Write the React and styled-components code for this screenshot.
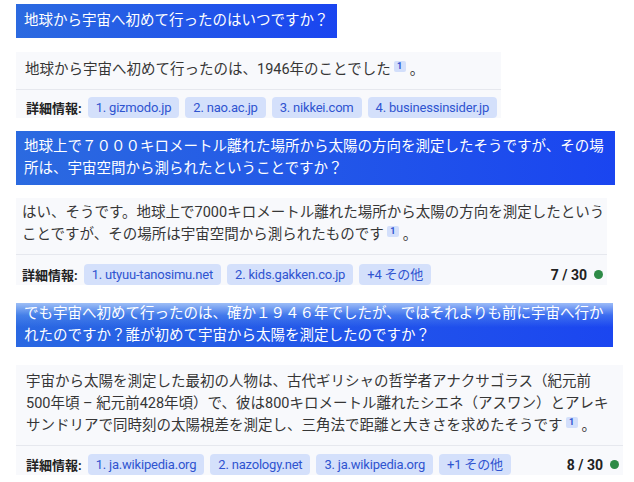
import React from 'react'
import styled, { createGlobalStyle } from 'styled-components'

const Global = createGlobalStyle`
  body{
    margin:0;
    background:#ffffff;
    font-family: Roboto, "Noto Sans CJK JP", sans-serif;
  }
`
const Hilo = styled.div`
  display:flex;
  flex-direction:column;
  align-items:flex-start;
  padding:0 16px;
`
const Pregunta = styled.div`
  margin-top:${p => p.mt}px;
  width:${p => p.w ? p.w + 'px' : 'auto'};
  box-sizing:border-box;
  padding:${p => p.pv}px 8px;
  color:#ffffff;
  font-size:14.5px;
  line-height:22px;
  white-space:nowrap;
  background:${p => p.fade
    ? 'linear-gradient(180deg, rgba(170,200,248,0.9) 0%, rgba(100,155,240,0.45) 28%, rgba(37,99,235,0) 55%), linear-gradient(90deg, #2a68e2, #1b46f0)'
    : 'linear-gradient(90deg, #2b6ae0, #1a45f0)'};
`
const Respuesta = styled.div`
  margin-top:${p => p.mt}px;
  width:${p => p.w ? p.w + 'px' : 'auto'};
  box-sizing:border-box;
  background:#f8f9fc;
`
const Texto = styled.div`
  padding:${p => p.pt}px 8px 8px ${p => p.pl}px;
  font-size:14.5px;
  line-height:22px;
  color:#363636;
  white-space:nowrap;
`
const Cita = styled.sup`
  display:inline-block;
  vertical-align:top;
  margin:2px 4px 0 3px;
  width:12px;
  height:11px;
  line-height:11px;
  text-align:center;
  border-radius:2px;
  background:#d3dffb;
  color:#2f54d0;
  font-size:9px;
  font-weight:700;
  font-family: Roboto, sans-serif;
`
const Pie = styled.div`
  display:flex;
  align-items:center;
  gap:6px;
  border-top:1px solid #e6e8ee;
  padding:${p => p.pt}px 4px 0 ${p => p.pl}px;
`
const Etiqueta = styled.span`
  flex-shrink:0;
  white-space:nowrap;
  font-size:13px;
  font-weight:700;
  color:#222222;
  font-family: Roboto, "Noto Sans CJK JP", sans-serif;
`
const Fuente = styled.span`
  flex-shrink:0;
  height:21px;
  line-height:21px;
  padding:0 8px;
  border-radius:4px;
  background:#d4e0fb;
  color:#2f54d0;
  font-size:13px;
  letter-spacing:-0.2px;
  white-space:nowrap;
`
const Contador = styled.span`
  margin-left:auto;
  display:flex;
  align-items:center;
  gap:7px;
  font-size:14px;
  font-weight:700;
  color:#222222;
  white-space:nowrap;
`
const Punto = styled.span`
  width:9px;
  height:9px;
  border-radius:50%;
  background:#2e8b47;
`

const App = () => {
  return (
    <>
      <Global />
      <Hilo>
        <Pregunta mt={4} pv={6}>地球から宇宙へ初めて行ったのはいつですか？</Pregunta>
        <Respuesta mt={14}>
          <Texto pt={7} pl={9}>地球から宇宙へ初めて行ったのは、1946年のことでした<Cita>1</Cita>。</Texto>
          <Pie pt={7} pl={10}>
            <Etiqueta>詳細情報:</Etiqueta>
            <Fuente>1. gizmodo.jp</Fuente>
            <Fuente>2. nao.ac.jp</Fuente>
            <Fuente>3. nikkei.com</Fuente>
            <Fuente>4. businessinsider.jp</Fuente>
          </Pie>
        </Respuesta>

        <Pregunta mt={13} pv={5} w={599}>
          地球上で７０００キロメートル離れた場所から太陽の方向を測定したそうですが、その場<br />
          所は、宇宙空間から測られたということですか？
        </Pregunta>
        <Respuesta mt={13} w={591}>
          <Texto pt={4} pl={6}>
            はい、そうです。地球上で7000キロメートル離れた場所から太陽の方向を測定したという<br />
            ことですが、その場所は宇宙空間から測られたものです<Cita>1</Cita>。
          </Texto>
          <Pie pt={9} pl={6}>
            <Etiqueta>詳細情報:</Etiqueta>
            <Fuente>1. utyuu-tanosimu.net</Fuente>
            <Fuente>2. kids.gakken.co.jp</Fuente>
            <Fuente>+4 その他</Fuente>
            <Contador>7 / 30<Punto /></Contador>
          </Pie>
        </Respuesta>

        <Pregunta mt={18} pv={0} w={597} fade>
          でも宇宙へ初めて行ったのは、確か１９４６年でしたが、ではそれよりも前に宇宙へ行か<br />
          れたのですか？誰が初めて宇宙から太陽を測定したのですか？
        </Pregunta>
        <Respuesta mt={18} w={607}>
          <Texto pt={6} pl={10}>
            宇宙から太陽を測定した最初の人物は、古代ギリシャの哲学者アナクサゴラス（紀元前<br />
            500年頃 – 紀元前428年頃）で、彼は800キロメートル離れたシエネ（アスワン）とアレキ<br />
            サンドリアで同時刻の太陽視差を測定し、三角法で距離と大きさを求めたそうです<Cita>1</Cita>。
          </Texto>
          <Pie pt={8} pl={10}>
            <Etiqueta>詳細情報:</Etiqueta>
            <Fuente>1. ja.wikipedia.org</Fuente>
            <Fuente>2. nazology.net</Fuente>
            <Fuente>3. ja.wikipedia.org</Fuente>
            <Fuente>+1 その他</Fuente>
            <Contador>8 / 30<Punto /></Contador>
          </Pie>
        </Respuesta>
      </Hilo>
    </>
  )
}

export default App
